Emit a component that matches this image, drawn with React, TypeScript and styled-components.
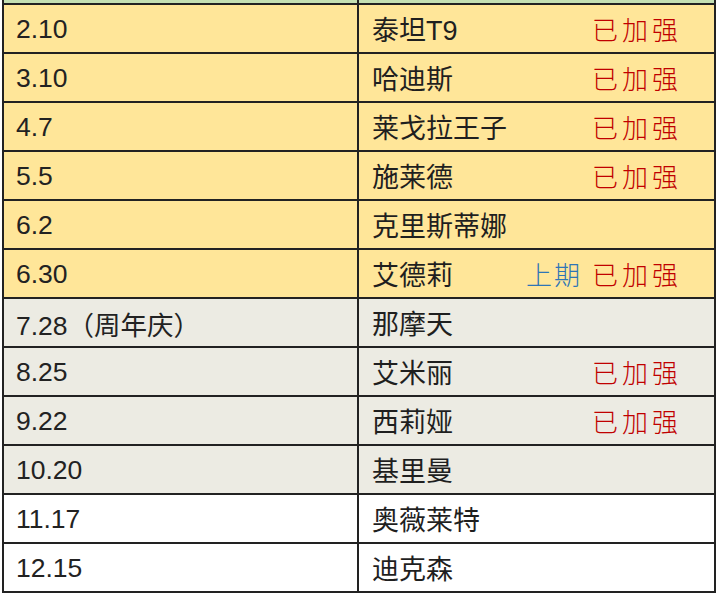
import React from 'react';
import styled, { createGlobalStyle } from 'styled-components';

const GlobalStyle = createGlobalStyle`
  html, body {
    margin: 0;
    padding: 0;
    background: #fff;
  }
  body {
    font-family: "Liberation Sans", "Noto Sans CJK SC", sans-serif;
  }
`;

type Tone = 'yellow' | 'gray' | 'white';

const bg: Record<Tone, string> = {
    yellow: '#ffe699',
    gray: '#ecebe3',
    white: '#ffffff',
};

interface RowData {
    date: string;
    name: string;
    tone: Tone;
    note?: string;
    buffed?: boolean;
}

const rows: RowData[] = [
    { date: '2.10', name: '泰坦T9', tone: 'yellow', buffed: true },
    { date: '3.10', name: '哈迪斯', tone: 'yellow', buffed: true },
    { date: '4.7', name: '莱戈拉王子', tone: 'yellow', buffed: true },
    { date: '5.5', name: '施莱德', tone: 'yellow', buffed: true },
    { date: '6.2', name: '克里斯蒂娜', tone: 'yellow' },
    { date: '6.30', name: '艾德莉', tone: 'yellow', note: '上期', buffed: true },
    { date: '7.28（周年庆）', name: '那摩天', tone: 'gray' },
    { date: '8.25', name: '艾米丽', tone: 'gray', buffed: true },
    { date: '9.22', name: '西莉娅', tone: 'gray', buffed: true },
    { date: '10.20', name: '基里曼', tone: 'gray' },
    { date: '11.17', name: '奥薇莱特', tone: 'white' },
    { date: '12.15', name: '迪克森', tone: 'white' },
];

export default function App() {
    return (
        <>
            <GlobalStyle />
            <Sheet>
                <TopStrip>
                    <StripCell />
                    <StripCell />
                </TopStrip>
                {rows.map((row, key) => (
                    <Row key={key} $tone={row.tone}>
                        <DateCell>{row.date}</DateCell>
                        <NameCell>
                            <span>{row.name}</span>
                            {row.buffed && (
                                <Tags>
                                    {row.note && <Note>{row.note}</Note>}
                                    <Buffed>已加强</Buffed>
                                </Tags>
                            )}
                        </NameCell>
                    </Row>
                ))}
            </Sheet>
        </>
    );
}

const Sheet = styled.div`
    width: 712px;
    margin-left: 2px;
    border-left: 2px solid #222;
    overflow: hidden;
`;

const TopStrip = styled.div`
    display: grid;
    grid-template-columns: 355px 357px;
    height: 3px;
    background: #c5e0b3;
    border-bottom: 2px solid #222;
`;

const StripCell = styled.div`
    border-right: 2px solid #222;
`;

const Row = styled.div<{ $tone: Tone }>`
    display: grid;
    grid-template-columns: 355px 357px;
    height: 47px;
    background: ${p => bg[p.$tone]};
    border-bottom: 2px solid #222;
`;

const DateCell = styled.div`
    display: flex;
    align-items: center;
    padding-top: 2px;
    padding-left: 12px;
    border-right: 2px solid #222;
    font-family: "Liberation Sans", "Noto Sans CJK SC", sans-serif;
    font-size: 26.5px;
    color: #222;
    white-space: nowrap;
`;

const NameCell = styled.div`
    display: flex;
    align-items: center;
    justify-content: space-between;
    padding-left: 13px;
    padding-right: 36px;
    border-right: 2px solid #222;
    font-family: "Liberation Sans", "Noto Sans CJK SC", sans-serif;
    font-size: 27px;
    color: #1f1f1f;
    white-space: nowrap;
`;

const Tags = styled.div`
    display: flex;
    align-items: center;
    gap: 10px;
`;

const Note = styled.span`
    font-family: "Noto Sans CJK SC", sans-serif;
    font-size: 26px;
    font-weight: 300;
    letter-spacing: 2px;
    color: #2e75b6;
`;

const Buffed = styled.span`
    font-family: "Noto Sans CJK SC", sans-serif;
    font-size: 26px;
    font-weight: 300;
    letter-spacing: 4px;
    margin-right: -4px;
    color: #c00000;
`;
